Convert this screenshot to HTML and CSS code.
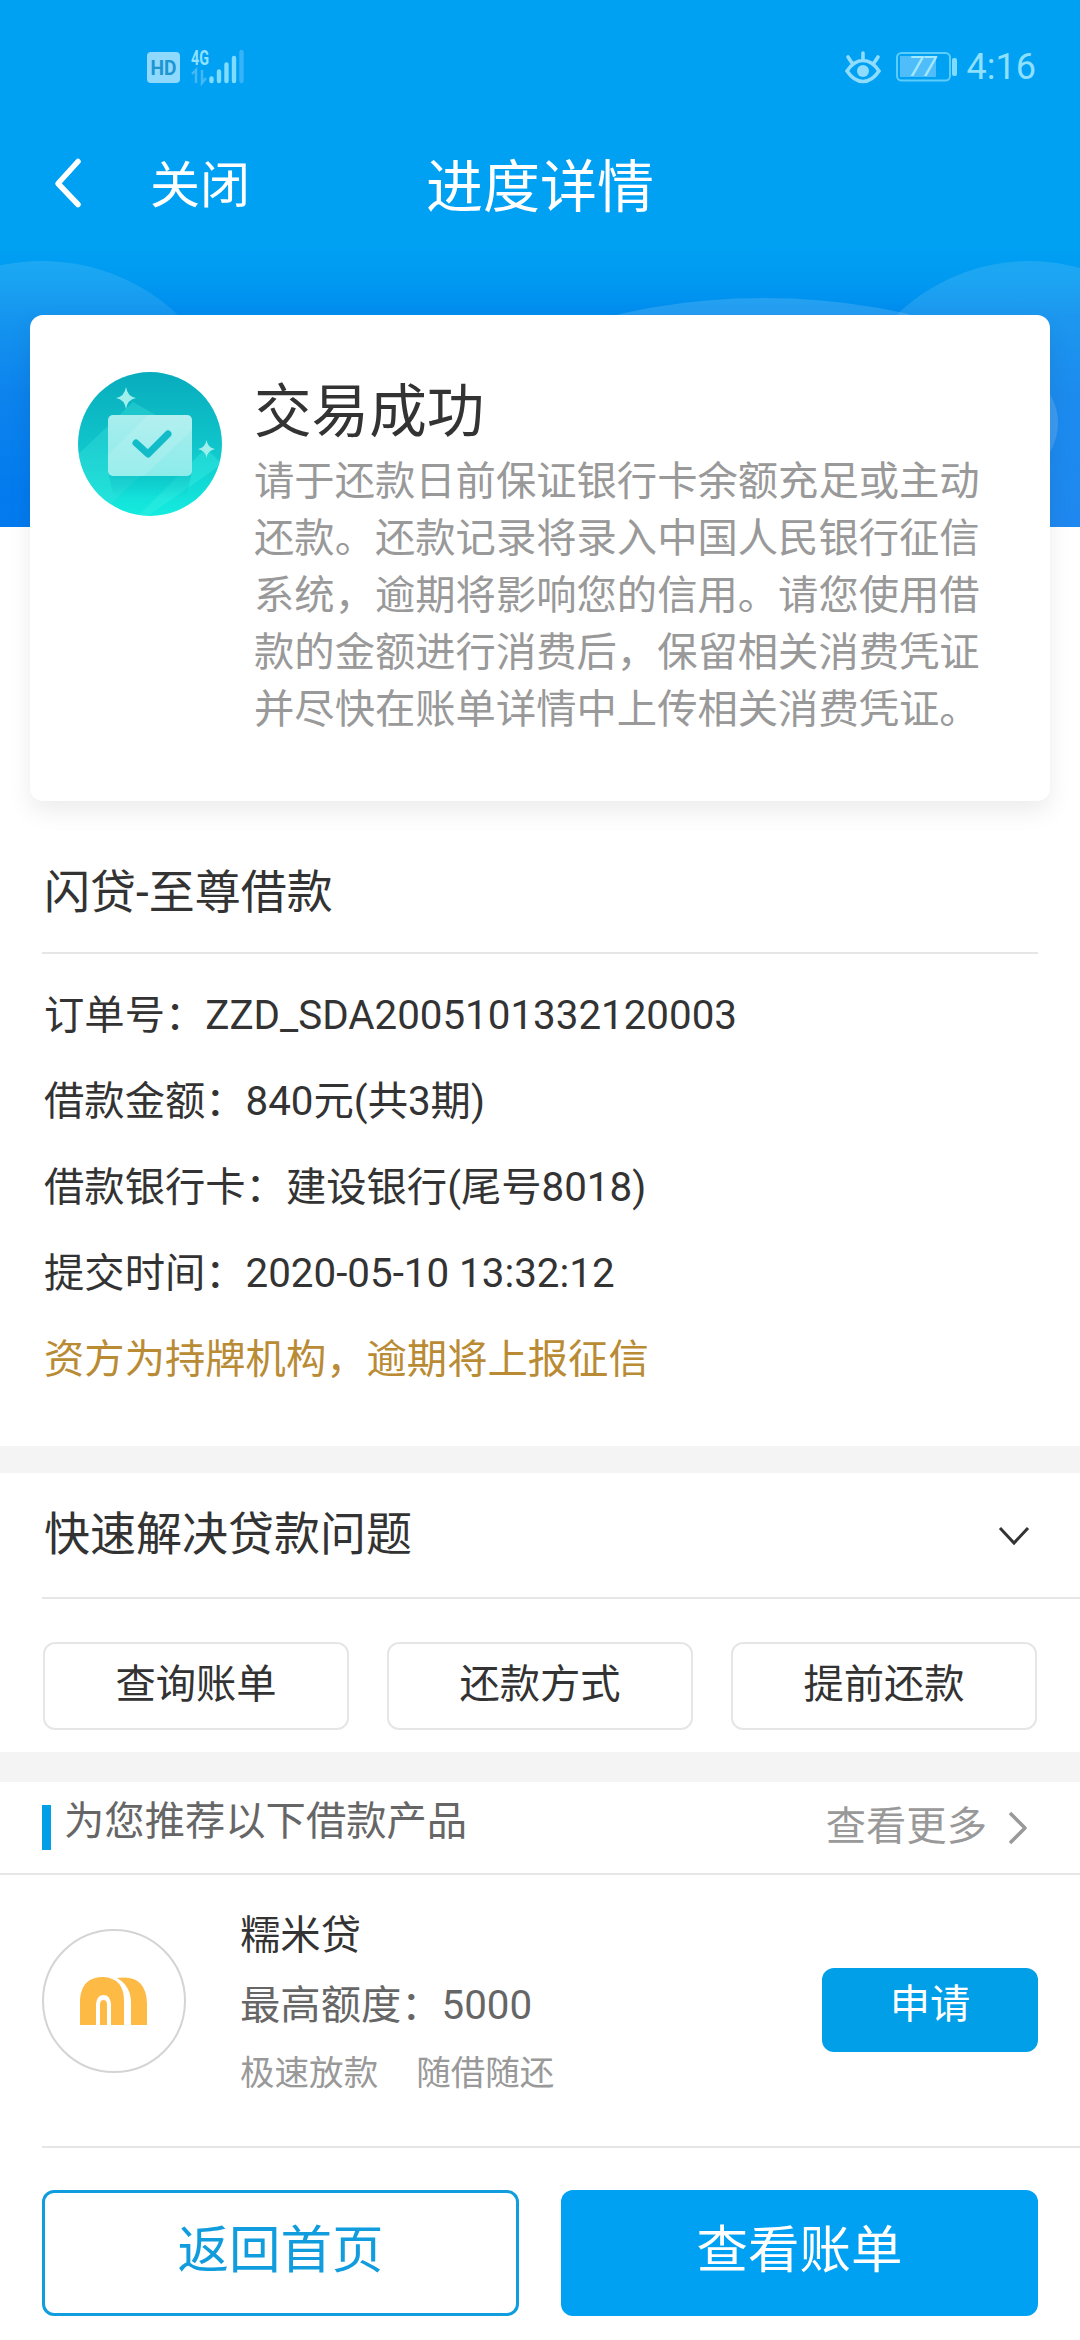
FILE: index.html
```html
<!DOCTYPE html>
<html lang="zh-CN">
<head>
    <meta charset="UTF-8">
    <meta name="viewport" content="width=device-width, initial-scale=1.0">
    <title>进度详情</title>
    <link rel="stylesheet" href="styles.css">
</head>
<body>
    <div class="page">
        <!-- Header background -->
        <svg class="hero-bg" width="1080" height="527" viewBox="0 0 1080 527">
            <defs>
                <linearGradient id="sky" x1="0" y1="0" x2="0" y2="527" gradientUnits="userSpaceOnUse">
                    <stop offset="0.47" stop-color="#00a0f3"/>
                    <stop offset="0.53" stop-color="#009af1"/>
                    <stop offset="0.6" stop-color="#008bee"/>
                    <stop offset="0.75" stop-color="#007dec"/>
                    <stop offset="1" stop-color="#047aef"/>
                </linearGradient>
                <linearGradient id="fade" x1="0" y1="0" x2="0" y2="1">
                    <stop offset="0" stop-color="#fff" stop-opacity="0.11"/>
                    <stop offset="0.6" stop-color="#fff" stop-opacity="0"/>
                </linearGradient>
            </defs>
            <rect width="1080" height="527" fill="url(#sky)"/>
            <circle cx="42" cy="459" r="198" fill="url(#fade)"/>
            <ellipse cx="764" cy="423" rx="294" ry="125" fill="#fff" fill-opacity="0.14"/>
            <circle cx="1029" cy="450" r="189" fill="#fff" fill-opacity="0.11"/>
        </svg>

        <div class="status-bar">
            <svg class="status-left" width="100" height="44" viewBox="0 -4 100 44">
                <rect x="0" y="3" width="33" height="31" rx="4" fill="#8fd9fd"/>
                <text class="hd" x="3.5" y="26" textLength="26" lengthAdjust="spacingAndGlyphs">HD</text>
                <text class="net" x="44" y="16" textLength="18" lengthAdjust="spacingAndGlyphs">4G</text>
                <path d="M45 25l4-4v13M55 21v13l4-5" fill="none" stroke="#45b9f8" stroke-width="2.4"/>
                <g stroke="#7fdcff" stroke-width="4.4" stroke-linecap="round">
                    <path d="M64.5 29.5v2.5M72 22.500v9.500M79.500 15.500v16.500M87 9v23"/>
                    <path d="M94.500 3v29" stroke="#37b4f7"/>
                </g>
            </svg>
            <div class="status-right">
                <svg width="38" height="34" viewBox="0 0 38 34" fill="none" stroke="#8fdcff" stroke-width="3.6" stroke-linecap="round">
                    <path d="M3 21Q10 10.500 19 10.500T35 21Q28 31.500 19 31.500T3 21zM19 3v7M4 7l4 6M34 7l-4 6"/>
                    <circle cx="19" cy="21" r="6" fill="#8fdcff" stroke="none"/>
                </svg>
                <svg class="battery" width="62" height="30" viewBox="0 0 62 30">
                    <rect x="1" y="1" width="53" height="27.500" rx="4.500" fill="none" stroke="#5ccdfb" stroke-width="2"/>
                    <rect x="4" y="4" width="36" height="21" fill="#4fbdf9"/>
                    <rect x="56" y="6" width="5" height="18" rx="2" fill="#7fdcff"/>
                    <text class="level" x="12.500" y="24" textLength="28">77</text>
                </svg>
                <span class="clock">4:16</span>
            </div>
        </div>

        <div class="nav-bar">
            <svg class="back" width="30" height="52" viewBox="0 0 30 52">
                <path d="M25 4.500L5 26.500L25 47.500" fill="none" stroke="#fff" stroke-width="5.500" stroke-linecap="round" stroke-linejoin="round"/>
            </svg>
            <span class="close">关闭</span>
            <h1>进度详情</h1>
        </div>

        <!-- Result card -->
        <div class="card">
            <svg class="result-icon" width="144" height="144" viewBox="0 0 144 144">
                <defs>
                    <linearGradient id="teal" x1="0" y1="0" x2="0" y2="1">
                        <stop offset="0" stop-color="#08acbd"/>
                        <stop offset="0.5" stop-color="#0fc4ca"/>
                        <stop offset="1" stop-color="#14ecdf"/>
                    </linearGradient>
                    <linearGradient id="paper" x1="0" y1="0" x2="0" y2="1">
                        <stop offset="0" stop-color="#a9edee"/>
                        <stop offset="1" stop-color="#8cecea"/>
                    </linearGradient>
                    <linearGradient id="under" x1="0" y1="0" x2="0" y2="1">
                        <stop offset="0" stop-color="#07b3bd" stop-opacity="0.5"/>
                        <stop offset="1" stop-color="#07b3bd" stop-opacity="0"/>
                    </linearGradient>
                    <clipPath id="disc"><circle cx="72" cy="72" r="72"/></clipPath>
                </defs>
                <g clip-path="url(#disc)">
                    <rect width="144" height="144" fill="url(#teal)"/>
                    <path d="M-10 92L55 30L108 60L14 150L-10 140z" fill="#3fe3dc" fill-opacity="0.35"/>
                    <path d="M128 76L144 92L70 144H60z" fill="#3ff0e4" fill-opacity="0.35"/>
                    <path d="M30 100H114L108 126H36z" fill="url(#under)"/>
                </g>
                <rect x="30" y="43" width="84" height="61" rx="5" fill="url(#paper)"/>
                <path d="M70 43H109Q114 43 114 48V58L66 104H35Q30 104 30 99V83z" fill="#fff" fill-opacity="0.12"/>
                <path d="M58 71L70 82L90 62" fill="none" stroke="#11bcc8" stroke-width="7" stroke-linecap="round" stroke-linejoin="round"/>
                <path d="M48 15Q49.500 24.500 58 26Q49.500 27.500 48 37Q46.500 27.500 38 26Q46.500 24.500 48 15z" fill="#9ff0ec"/>
                <path d="M128.500 68Q129.500 75.500 137 77Q129.500 78.500 128.500 86Q127.500 78.500 120 77Q127.500 75.500 128.500 68z" fill="#9ff0ec"/>
            </svg>
            <div class="result-text">
                <h2>交易成功</h2>
                <p>请于还款日前保证银行卡余额充足或主动还款。还款记录将录入中国人民银行征信系统，逾期将影响您的信用。请您使用借款的金额进行消费后，保留相关消费凭证并尽快在账单详情中上传相关消费凭证。</p>
            </div>
        </div>

        <!-- Loan details -->
        <div class="details">
            <h3>闪贷-至尊借款</h3>
            <ul>
                <li>订单号：ZZD_SDA2005101332120003</li>
                <li>借款金额：840元(共3期)</li>
                <li>借款银行卡：建设银行(尾号8018)</li>
                <li>提交时间：2020-05-10 13:32:12</li>
                <li class="notice">资方为持牌机构，逾期将上报征信</li>
            </ul>
        </div>

        <!-- Quick help -->
        <div class="help">
            <div class="help-title">
                <h3>快速解决贷款问题</h3>
                <svg width="34" height="22" viewBox="0 0 34 22">
                    <path d="M3 3L17 18L31 3" fill="none" stroke="#333" stroke-width="3"/>
                </svg>
            </div>
            <div class="help-buttons">
                <button>查询账单</button>
                <button>还款方式</button>
                <button>提前还款</button>
            </div>
        </div>

        <!-- Recommended products -->
        <div class="recommend">
            <div class="recommend-title">
                <span class="mark"></span>
                <span class="label">为您推荐以下借款产品</span>
                <a class="more">查看更多</a>
                <svg width="22" height="36" viewBox="0 0 22 36">
                    <path d="M3 3L18 18L3 33" fill="none" stroke="#999" stroke-width="3.500" stroke-linejoin="round"/>
                </svg>
            </div>
            <div class="product">
                <div class="logo">
                    <svg width="68" height="48" viewBox="0 0 68 48">
                        <path d="M0 48V22Q2 0 23 0Q44 1 44 24V48H31V27Q30 18 23.500 18Q17 18 16 27V48z" fill="#fdbb46"/>
                        <path d="M20 48V28Q20 23 23.500 23Q27 23 27 28V48z" fill="#fdbb46"/>
                        <path d="M37 1Q66 -3 67 26V48H51V26Q51 9 37 1z" fill="#fdbb46"/>
                    </svg>
                </div>
                <div class="product-info">
                    <div class="name">糯米贷</div>
                    <div class="limit">最高额度：5000</div>
                    <div class="tags"><span>极速放款</span><span>随借随还</span></div>
                </div>
                <button class="apply">申请</button>
            </div>
        </div>

        <div class="footer">
            <button class="home">返回首页</button>
            <button class="bill">查看账单</button>
        </div>
    </div>
</body>
</html>
```

FILE: styles.css
```css
* {
    box-sizing: border-box;
}
body {
    font-family: Roboto, "Noto Sans CJK SC", sans-serif;
    line-height: 1.2;
    margin: 0;
    color: #333;
    background-color: #fff;
}
h1, h2, h3, p, ul {
    margin: 0;
    padding: 0;
    font-weight: normal;
}
ul {
    list-style-type: none;
}
svg {
    display: block;
    flex-shrink: 0;
}
button {
    font-family: inherit;
    font-size: 40.3px;
    line-height: 1.2;
    color: #333;
    padding: 0;
    border: none;
    border-radius: 12px;
    background-color: #fff;
}
.page {
    position: relative;
    width: 1080px;
    height: 2340px;
    overflow: hidden;
}
.hero-bg {
    position: absolute;
    top: 0;
    left: 0;
    z-index: -1;
}

/* Status bar */
.status-bar {
    display: flex;
    justify-content: space-between;
    align-items: center;
    height: 133px;
    padding: 0 44px 0 147px;
}
.hd {
    font-size: 21px;
    font-weight: bold;
    fill: #1b96d2;
}
.net {
    font-size: 21px;
    font-weight: bold;
    fill: #8fe3ff;
}
.status-right {
    display: flex;
    align-items: center;
}
.battery {
    margin-left: 14px;
}
.level {
    font-size: 27px;
    font-style: italic;
    fill: #a5e9ff;
}
.clock {
    margin-left: 9px;
    font-size: 36px;
    line-height: 40px;
    color: #8fe0ff;
}

/* Title bar */
.nav-bar {
    display: flex;
    align-items: center;
    height: 106px;
    color: #fff;
}
.back {
    margin: -6px 0 0 53px;
}
.close {
    width: 176px;
    margin-left: 67px;
    font-size: 50px;
}
.nav-bar h1 {
    margin: 4px 0 0 100px;
    font-size: 57px;
    line-height: 70px;
}

/* Result card */
.card {
    display: flex;
    height: 486px;
    margin: 76px 30px 0;
    padding: 57px 48px 0;
    border-radius: 13px;
    background-color: #fff;
    box-shadow: 0 10px 24px rgba(0, 0, 0, 0.08);
}
.result-text {
    width: 730px;
    margin-left: 32px;
}
.result-text h2 {
    font-size: 57.6px;
    line-height: 70px;
    margin-top: 6px;
}
.result-text p {
    font-size: 40.32px;
    line-height: 57px;
    margin-top: 5px;
    color: #999;
}

/* Loan details */
.details {
    height: 645px;
    padding: 63px 42px 0;
}
.details h3 {
    height: 90px;
    padding-left: 2px;
    font-size: 46px;
    line-height: 56px;
    border-bottom: 2px solid #e6e6e6;
}
.details ul {
    padding: 19px 0 0 2px;
}
.details li {
    font-size: 40.32px;
    line-height: 86px;
}
.details .notice {
    color: #b98b35;
}

/* Quick help */
.help {
    border-top: 27px solid #f4f4f4;
    border-bottom: 30px solid #f4f4f4;
}
.help-title {
    display: flex;
    justify-content: space-between;
    align-items: center;
    height: 126px;
    margin-left: 42px;
    padding: 0 49px 0 2px;
    border-bottom: 2px solid #e6e6e6;
}
.help-title h3 {
    font-size: 46px;
}
.help-title svg {
    margin-top: 2px;
}
.help-buttons {
    display: flex;
    justify-content: space-between;
    height: 153px;
    padding: 43px 43px 0;
}
.help-buttons button {
    width: 306px;
    height: 88px;
    padding-bottom: 2px;
    border: 2px solid #e6e6e6;
}

/* Recommended products */
.recommend-title {
    display: flex;
    align-items: center;
    height: 93px;
    padding: 0 51px 0 42px;
    font-size: 40.32px;
    border-bottom: 2px solid #e6e6e6;
}
.mark {
    width: 9px;
    height: 45px;
    background-color: #009fe6;
}
.label {
    margin: -10px auto 0 13px;
    color: #666;
}
.more {
    margin-right: 20px;
    color: #999;
}
.product {
    display: flex;
    height: 273px;
    margin-left: 42px;
    padding-right: 42px;
    border-bottom: 2px solid #e6e6e6;
}
.logo {
    display: flex;
    justify-content: center;
    align-items: center;
    width: 144px;
    height: 144px;
    margin-top: 54px;
    border: 2px solid #d4d4d4;
    border-radius: 50%;
}
.product-info {
    margin: 26px auto 0 54px;
    font-size: 40.32px;
    line-height: 70px;
}
.limit {
    color: #666;
}
.tags {
    display: flex;
    gap: 38px;
    font-size: 34.56px;
    line-height: 65px;
    color: #999;
}
.apply {
    width: 216px;
    height: 84px;
    margin-top: 93px;
    padding-bottom: 10px;
    color: #fff;
    background-color: #009fe8;
}

/* Bottom buttons */
.footer {
    display: flex;
    justify-content: space-between;
    padding: 42px 42px 0;
}
.footer button {
    width: 477px;
    height: 126px;
    padding-bottom: 5px;
    font-size: 51.5px;
}
.footer .home {
    color: #119ddd;
    border: 3px solid #119ddd;
}
.footer .bill {
    color: #fff;
    background-color: #00a0f2;
}
```
